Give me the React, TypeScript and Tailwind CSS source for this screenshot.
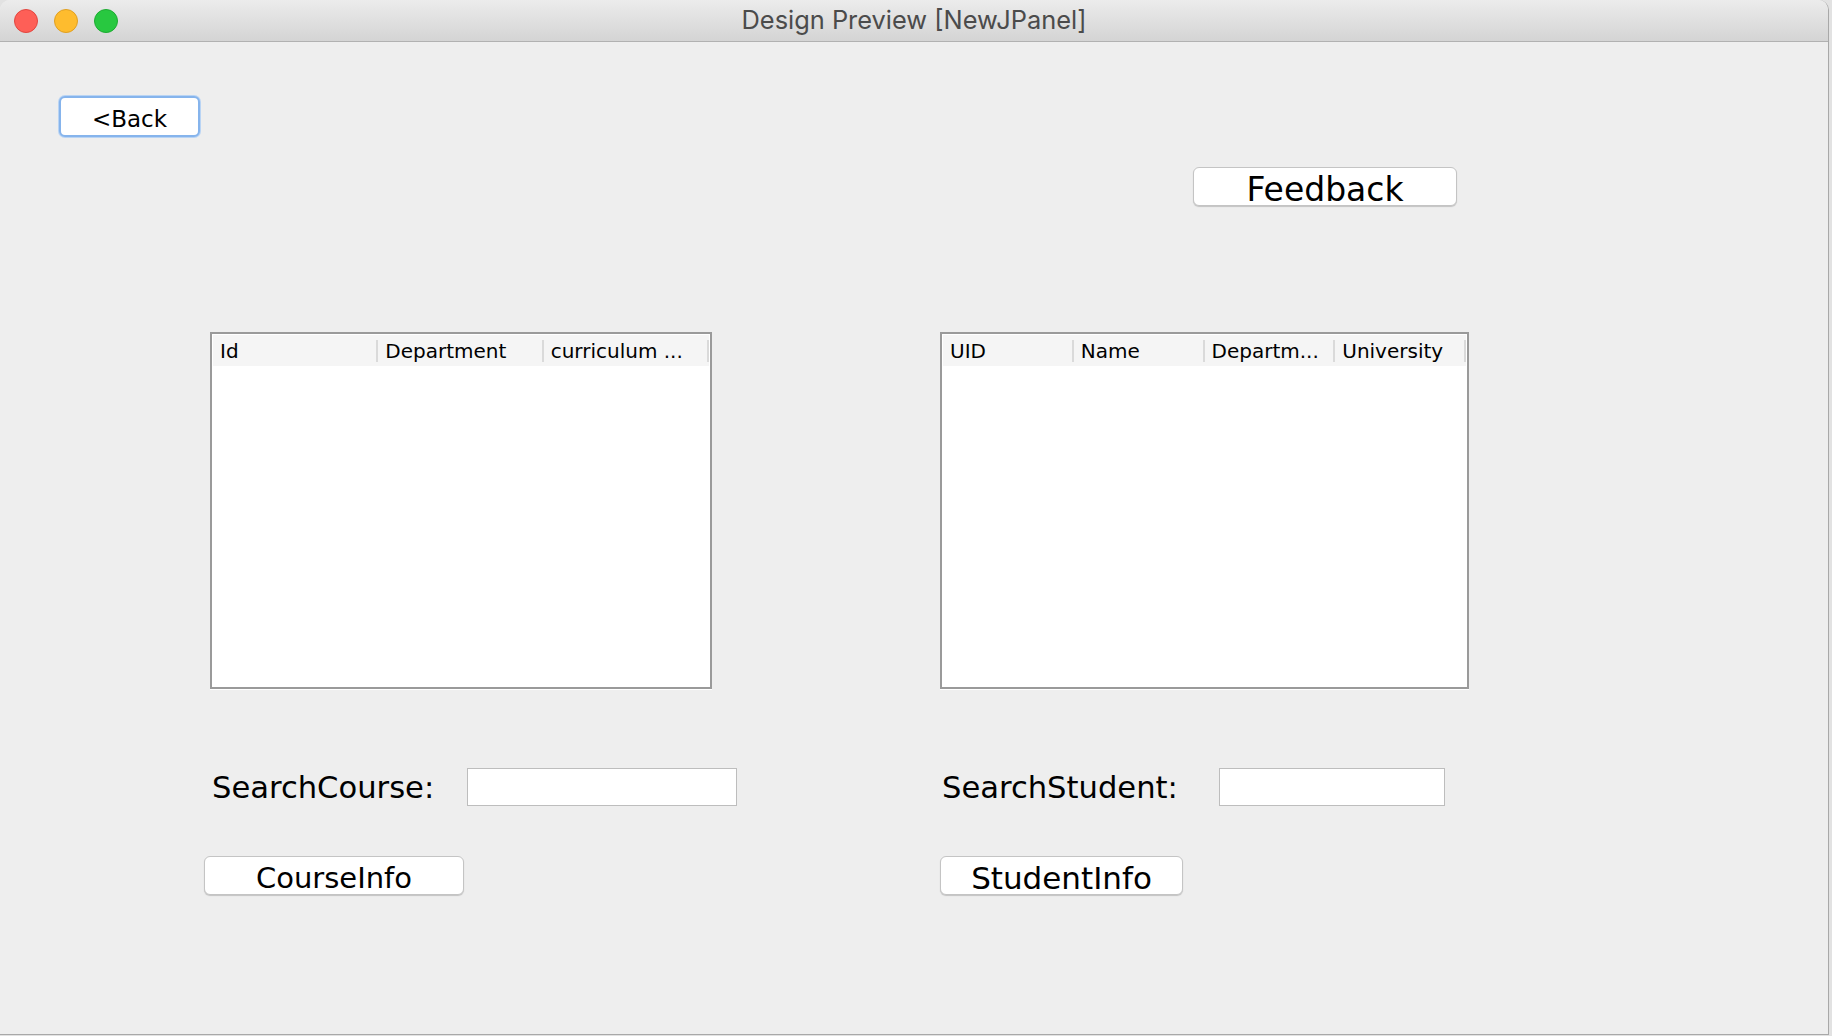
import React from "react";

const jf = { fontFamily: '"DejaVu Sans", "Noto Sans", sans-serif' };

function JButton({ label, w, h, size, focus }: { label: string; w: string; h: string; size: string; focus?: boolean }) {
  return (
    <div
      className={`${w} ${h} ${size} leading-none pt-[6px] flex items-center justify-center bg-white text-black rounded-[6px] ${
        focus
          ? "border-[2px] border-[#86b4ec] shadow-[0_0_0_1px_#b9d4f4]"
          : "border border-[#c4c4c4] shadow-[0_1px_1px_rgba(0,0,0,0.18)]"
      }`}
      style={jf}
    >
      {label}
    </div>
  );
}

function Table({ cols, w, colW }: { cols: string[]; w: string; colW: string }) {
  return (
    <div className={`${w} h-[357px] border-[2px] border-[#9a9a9a] bg-white p-[1px] shadow-[0_1px_0_#ffffff]`}>
      <div className="flex h-[31px] bg-[#f5f5f5] text-[20px] text-black" style={jf}>
        {cols.map((c) => (
          <div key={c} className={`${colW} flex items-center relative pl-[7px] whitespace-nowrap overflow-hidden`}>
            {c}
            <div className="absolute right-0 top-[5px] bottom-[4px] w-[2px] bg-[#dadada]" />
          </div>
        ))}
      </div>
    </div>
  );
}

export default function App() {
  return (
    <div className="w-[1832px] h-[1036px] bg-[#e2e2e2] overflow-hidden">
      <div className="w-[1829px] h-[1035px] rounded-t-[10px] bg-[#eeeeee] border-r border-b border-[#a8a8a8] flex flex-col overflow-hidden">
        {/* Title bar */}
        <div className="h-[42px] shrink-0 bg-gradient-to-b from-[#ececec] to-[#d4d4d4] border-b border-[#b1b1b1] flex items-center relative">
          <div className="flex items-center gap-[16px] pl-[14px]">
            <div className="w-[24px] h-[24px] rounded-full bg-[#fe5f57] border border-[#e1463f]" />
            <div className="w-[24px] h-[24px] rounded-full bg-[#febc2e] border border-[#df9f22]" />
            <div className="w-[24px] h-[24px] rounded-full bg-[#28c840] border border-[#1dab32]" />
          </div>
          <div
            className="absolute left-0 right-0 top-0 bottom-0 flex items-center justify-center text-[25.4px] text-[#4b4b4b] pointer-events-none"
            style={{ fontFamily: '"Inter", "Liberation Sans", sans-serif' }}
          >
            Design Preview [NewJPanel]
          </div>
        </div>

        {/* Content */}
        <div className="flex flex-col">
          <div className="pl-[59px] pt-[54px]">
            <JButton label="<Back" w="w-[141px]" h="h-[41px]" size="text-[23px]" focus />
          </div>
          <div className="pl-[1193px] pt-[30px]">
            <JButton label="Feedback" w="w-[264px]" h="h-[39px]" size="text-[33px]" />
          </div>
          <div className="flex pt-[126px]">
            <div className="pl-[210px]">
              <Table cols={["Id", "Department", "curriculum ..."]} w="w-[502px]" colW="w-[166px]" />
            </div>
            <div className="pl-[228px]">
              <Table cols={["UID", "Name", "Departm...", "University"]} w="w-[529px]" colW="w-[131px]" />
            </div>
          </div>
          <div className="flex items-center h-[38px] mt-[79px] text-[30.6px] leading-none text-black" style={jf}>
            <div className="pl-[212px] w-[467px] pt-[2px]">SearchCourse:</div>
            <div className="w-[270px] h-[38px] bg-white border border-[#bdbdbd]" />
            <div className="pl-[205px] w-[482px] pt-[2px]">SearchStudent:</div>
            <div className="w-[226px] h-[38px] bg-white border border-[#bdbdbd]" />
          </div>
          <div className="flex pt-[50px]">
            <div className="pl-[204px]">
              <JButton label="CourseInfo" w="w-[260px]" h="h-[39px]" size="text-[29px]" />
            </div>
            <div className="pl-[476px]">
              <JButton label="StudentInfo" w="w-[243px]" h="h-[39px]" size="text-[31px]" />
            </div>
          </div>
        </div>
      </div>
    </div>
  );
}
